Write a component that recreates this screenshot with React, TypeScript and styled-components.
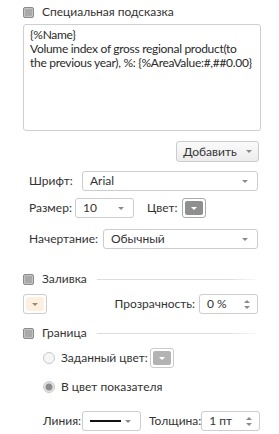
import styled, { createGlobalStyle } from "styled-components";

const GlobalStyle = createGlobalStyle`
  body {
    margin: 0;
    background: #ffffff;
    font-family: Lato, "Open Sans", "DejaVu Sans", sans-serif;
    font-size: 12px;
    line-height: 14px;
    color: #333333;
  }
`;

const Panel = styled.div`
  width: 279px;
  height: 434px;
  box-sizing: border-box;
  padding: 0 18px 0 23px;
  display: flex;
  flex-direction: column;
`;

const Header = styled.div<{ $top: number }>`
  display: flex;
  align-items: center;
  gap: 8px;
  height: 14px;
  margin-top: ${(p) => p.$top}px;
  white-space: nowrap;
`;

const HeaderLine = styled.div`
  flex: 1;
  height: 1px;
  margin-left: 2px;
  background: linear-gradient(to right, #dddddd 80%, #ffffff);
`;

const Check = styled.span`
  width: 9px;
  height: 9px;
  border: 1px solid #8a8a8a;
  border-radius: 2px;
  background: #a9a9a9;
  box-shadow: inset 0 0 0 1px #c4c4c4;
  flex: none;
`;

const TextArea = styled.div`
  margin-top: 5px;
  width: 238px;
  height: 107px;
  box-sizing: border-box;
  border: 1px solid #cfcfcf;
  border-radius: 3px;
  padding: 3px 2px 4px 6px;
  line-height: 14px;
  letter-spacing: -0.3px;
  color: #2a2a2a;
  overflow: hidden;
`;

const TextLine = styled.div`
  white-space: nowrap;
`;

const ButtonRow = styled.div`
  display: flex;
  justify-content: flex-end;
  margin-top: 10px;
  padding-right: 2px;
`;

const DropButton = styled.div`
  width: 83px;
  height: 21px;
  box-sizing: border-box;
  border: 1px solid #cccccc;
  border-radius: 3px;
  background: linear-gradient(#fafafa, #ececec);
  display: flex;
  align-items: center;
  justify-content: center;
  gap: 9px;
  color: #333333;
`;

const Arrow = styled.span`
  width: 0;
  height: 0;
  border-left: 3px solid transparent;
  border-right: 3px solid transparent;
  border-top: 3px solid #8a8a8a;
  flex: none;
`;

const Row = styled.div<{ $top: number; $indent?: number }>`
  display: flex;
  align-items: center;
  margin-top: ${(p) => p.$top}px;
  padding-left: ${(p) => p.$indent ?? 6}px;
  white-space: nowrap;
`;

const Label = styled.span<{ $width?: number }>`
  width: ${(p) => (p.$width ? `${p.$width}px` : "auto")};
  flex: none;
  color: #333333;
`;

const Select = styled.div<{ $width?: number }>`
  ${(p) => (p.$width ? `width: ${p.$width}px; flex: none;` : "flex: 1;")}
  height: 20px;
  box-sizing: border-box;
  border: 1px solid #cccccc;
  border-radius: 3px;
  background: #ffffff;
  display: flex;
  align-items: center;
  justify-content: space-between;
  padding: 0 9px 0 7px;
  margin-right: 3px;
`;

const Spinner = styled(Select)`
  padding-right: 7px;
  margin-left: auto;
`;

const SpinArrows = styled.span`
  display: flex;
  flex-direction: column;
  gap: 3px;
  &::before,
  &::after {
    content: "";
    border-left: 3px solid transparent;
    border-right: 3px solid transparent;
  }
  &::before {
    border-bottom: 3px solid #8a8a8a;
  }
  &::after {
    border-top: 3px solid #8a8a8a;
  }
`;

const ColorButton = styled.div<{ $fill: string; $border: string }>`
  position: relative;
  width: 24px;
  height: 20px;
  box-sizing: border-box;
  border: 1px solid ${(p) => p.$border};
  border-radius: 3px;
  background: #ffffff;
  padding: 2px;
  flex: none;
  &::after {
    content: "";
    display: flex;
    height: 100%;
    border-radius: 2px;
    background: ${(p) => p.$fill};
  }
`;

const ColorArrow = styled.span<{ $dark?: boolean }>`
  position: absolute;
  left: 50%;
  top: 50%;
  transform: translate(-50%, -30%);
  border-left: 3px solid transparent;
  border-right: 3px solid transparent;
  border-top: 3px solid ${(p) => (p.$dark ? "#9a8a7a" : "#ffffff")};
  z-index: 1;
`;

const Radio = styled.span<{ $on?: boolean }>`
  width: 10px;
  height: 10px;
  border: 1px solid #c8c8c8;
  border-radius: 50%;
  flex: none;
  background: ${(p) =>
    p.$on ? "radial-gradient(circle, #8c8c8c 3px, #e4e4e4 4px)" : "#f6f6f6"};
  margin-right: 6px;
`;

const LineSample = styled.span`
  width: 31px;
  height: 2px;
  background: #111111;
`;

export default function App() {
  return (
    <>
      <GlobalStyle />
      <Panel>
        <Header $top={5}>
          <Check />
          Специальная подсказка
        </Header>
        <TextArea>
          <TextLine>{"{%Name}"}</TextLine>
          <TextLine>Volume index of gross regional product(to</TextLine>
          <TextLine>{"the previous year), %: {%AreaValue:#,##0.00}"}</TextLine>
        </TextArea>
        <ButtonRow>
          <DropButton>
            Добавить <Arrow />
          </DropButton>
        </ButtonRow>
        <Row $top={9}>
          <Label $width={53}>Шрифт:</Label>
          <Select>
            Arial <Arrow />
          </Select>
        </Row>
        <Row $top={7}>
          <Label $width={46}>Размер:</Label>
          <Select $width={59}>
            10 <Arrow />
          </Select>
          <Label style={{ marginLeft: 10, marginRight: 4 }}>Цвет:</Label>
          <ColorButton $fill="#8f8f8f" $border="#aaaaaa">
            <ColorArrow />
          </ColorButton>
        </Row>
        <Row $top={11}>
          <Label $width={74}>Начертание:</Label>
          <Select>
            Обычный <Arrow />
          </Select>
        </Row>
        <Header $top={23}>
          <Check />
          Заливка
          <HeaderLine />
        </Header>
        <Row $top={8} $indent={0}>
          <ColorButton $fill="#fdf0e0" $border="#cccccc">
            <ColorArrow $dark />
          </ColorButton>
          <Label style={{ marginLeft: "auto", marginRight: 4 }}>Прозрачность:</Label>
          <Spinner $width={59} style={{ marginLeft: 0 }}>
            0 % <SpinArrows />
          </Spinner>
        </Row>
        <Header $top={12}>
          <Check />
          Граница
          <HeaderLine />
        </Header>
        <Row $top={8} $indent={20}>
          <Radio />
          <Label style={{ marginRight: 2 }}>Заданный цвет:</Label>
          <ColorButton $fill="#b3b3b3" $border="#cccccc">
            <ColorArrow />
          </ColorButton>
        </Row>
        <Row $top={12} $indent={20}>
          <Radio $on />
          <Label>В цвет показателя</Label>
        </Row>
        <Row $top={17} $indent={20}>
          <Label $width={39}>Линия:</Label>
          <Select $width={59}>
            <LineSample /> <Arrow />
          </Select>
          <Label style={{ marginLeft: 5 }}>Толщина:</Label>
          <Spinner $width={59}>
            1 пт <SpinArrows />
          </Spinner>
        </Row>
      </Panel>
    </>
  );
}
